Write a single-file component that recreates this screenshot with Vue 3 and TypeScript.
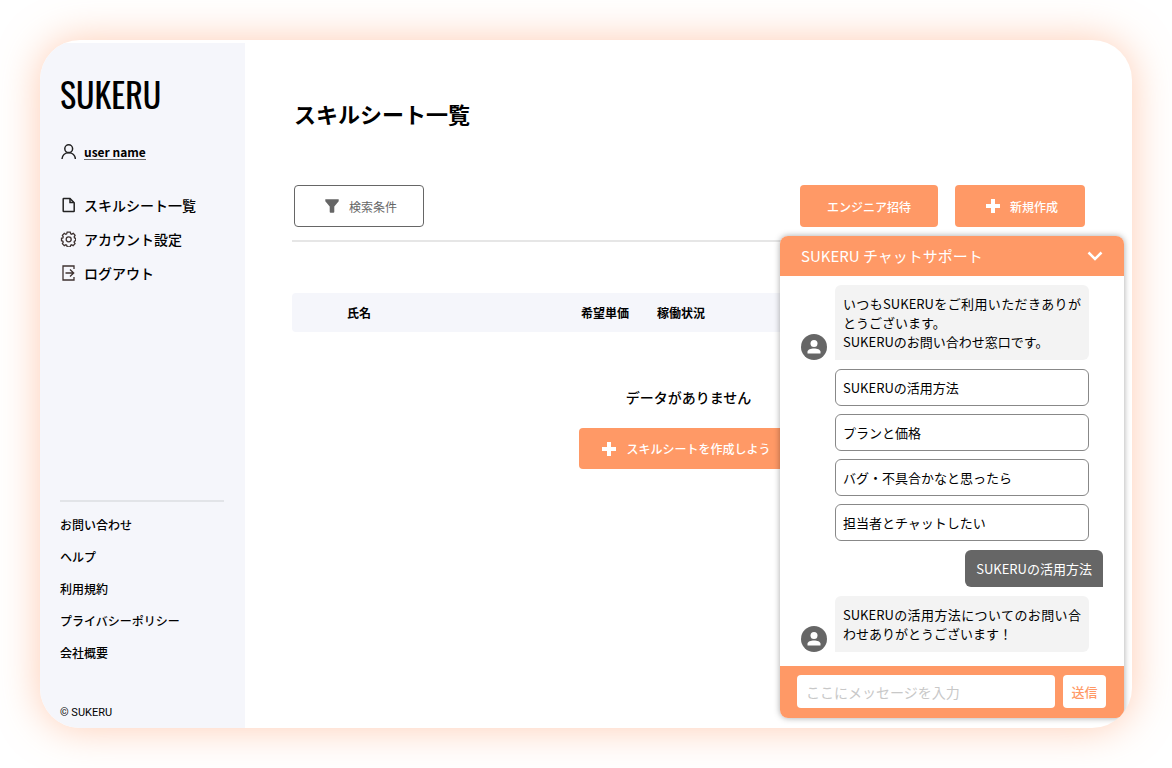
<script setup lang="ts">
import { ref } from 'vue'

type IconName = 'file' | 'gear' | 'logout'

const navItems: { label: string; icon: IconName }[] = [
  { label: 'スキルシート一覧', icon: 'file' },
  { label: 'アカウント設定', icon: 'gear' },
  { label: 'ログアウト', icon: 'logout' },
]

const footerLinks: string[] = ['お問い合わせ', 'ヘルプ', '利用規約', 'プライバシーポリシー', '会社概要']

const chatOptions: string[] = [
  'SUKERUの活用方法',
  'プランと価格',
  'バグ・不具合かなと思ったら',
  '担当者とチャットしたい',
]

const message = ref('')
</script>

<template>
  <div class="page">
    <div class="card">
      <aside class="sidebar">
        <div class="logo">SUKERU</div>

        <a href="#" class="user">
          <svg class="icon" viewBox="0 0 16 16" aria-hidden="true">
            <circle cx="8.700" cy="4.700" r="3.900" />
            <path d="M2 15c.2-3.700 2.900-6.300 6.700-6.300s6.500 2.600 6.700 6.300" />
          </svg>
          <span class="user-name">user name</span>
        </a>

        <nav class="nav">
          <a v-for="item in navItems" :key="item.label" href="#" class="nav-link">
            <svg v-if="item.icon === 'file'" class="icon" viewBox="0 0 16 16" aria-hidden="true">
              <path d="M3.700 1.500h6.300l4.200 4.200v8.300q0 .5-.5.5H3.700q-.5 0-.5-.5V2q0-.5.500-.5z" />
              <path d="M10 1.800v3.800h4" />
            </svg>
            <svg v-else-if="item.icon === 'gear'" class="icon warm" viewBox="0 0 16 16" aria-hidden="true">
              <path
                d="M7.200 1.100h3l.5 1.700 1 .4 1.600-.8 1.800 2-.9 1.500.3 1 1.200.4v2.400l-1.300.5-.3 1 .9 1.500-1.900 1.900-1.500-.8-.9.4-.5 1.700H7.200l-.5-1.700-.9-.4-1.500.8-1.900-1.900.8-1.500-.3-1-1.400-.5V7.300l1.400-.4.3-1-.8-1.500 1.900-2 1.500.8.900-.4z"
              />
              <circle cx="8.700" cy="8.300" r="2.500" />
            </svg>
            <svg v-else class="icon warm" viewBox="0 0 16 16" aria-hidden="true">
              <path d="M14 4V1H3v14h11v-3" />
              <path d="M5.500 8h8.200M10 4.500L13.700 8 10 11.500" />
            </svg>
            <span>{{ item.label }}</span>
          </a>
        </nav>

        <div class="side-footer">
          <a v-for="link in footerLinks" :key="link" href="#" class="side-link">{{ link }}</a>
        </div>
        <small class="copyright">© SUKERU</small>
      </aside>

      <main class="main">
        <h1 class="title">スキルシート一覧</h1>

        <div class="toolbar">
          <button type="button" class="btn btn-outline">
            <svg class="glyph" viewBox="0 0 14 14" aria-hidden="true">
              <path d="M.3.300h13.400v2L9.300 7.500v5.300q0 .9-.9.900H5.600q-.9 0-.9-.9V7.500L.3 2.300z" />
            </svg>
            検索条件
          </button>
          <div class="actions">
            <button type="button" class="btn btn-invite">エンジニア招待</button>
            <button type="button" class="btn btn-new">
              <svg class="glyph" viewBox="0 0 14 14" aria-hidden="true">
                <path d="M5 0h4v5h5v4H9v5H5V9H0V5h5z" />
              </svg>
              新規作成
            </button>
          </div>
        </div>

        <table class="table">
          <thead>
            <tr>
              <th scope="col" class="col-name">氏名</th>
              <th scope="col" class="col-price">希望単価</th>
              <th scope="col">稼働状況</th>
            </tr>
          </thead>
        </table>

        <section class="empty">
          <p class="empty-text">データがありません</p>
          <button type="button" class="btn btn-create">
            <svg class="glyph" viewBox="0 0 14 14" aria-hidden="true">
              <path d="M5 0h4v5h5v4H9v5H5V9H0V5h5z" />
            </svg>
            スキルシートを作成しよう
          </button>
        </section>
      </main>

      <section class="chat" aria-label="チャットサポート">
        <header class="chat-head">
          <h2 class="chat-title">SUKERU チャットサポート</h2>
          <button type="button" class="chat-toggle" aria-label="閉じる">
            <svg viewBox="0 0 16 10" aria-hidden="true">
              <path d="M1.500 1.500L8 8l6.500-6.500" />
            </svg>
          </button>
        </header>

        <div class="chat-body">
          <div class="row">
            <svg class="avatar" viewBox="0 0 26 26" aria-hidden="true">
              <circle class="avatar-bg" cx="13" cy="13" r="13" />
              <circle cx="13" cy="9.500" r="3.500" />
              <path d="M6.500 19.500v-1.700c0-2.200 3.300-3.400 6.500-3.400s6.500 1.200 6.500 3.400v1.700z" />
            </svg>
            <p class="bubble">いつもSUKERUをご利用いただきありがとうございます。<br />SUKERUのお問い合わせ窓口です。</p>
          </div>

          <div class="options">
            <button v-for="option in chatOptions" :key="option" type="button" class="option">{{ option }}</button>
          </div>

          <p class="reply">SUKERUの活用方法</p>

          <div class="row">
            <svg class="avatar" viewBox="0 0 26 26" aria-hidden="true">
              <circle class="avatar-bg" cx="13" cy="13" r="13" />
              <circle cx="13" cy="9.500" r="3.500" />
              <path d="M6.500 19.500v-1.700c0-2.200 3.300-3.400 6.500-3.400s6.500 1.200 6.500 3.400v1.700z" />
            </svg>
            <p class="bubble">SUKERUの活用方法についてのお問い合わせありがとうございます！</p>
          </div>
        </div>

        <form class="chat-form" @submit.prevent="message = ''">
          <input
            v-model="message"
            type="text"
            class="chat-input"
            aria-label="メッセージ"
            placeholder="ここにメッセージを入力"
          />
          <button type="submit" class="chat-send">送信</button>
        </form>
      </section>
    </div>
  </div>
</template>

<style>
body {
  margin: 0;
  background: #fff;
}
</style>

<style scoped>
.page,
.page * {
  box-sizing: border-box;
}

.page {
  display: flex;
  min-height: 100vh;
  padding: 40px;
  font-family: 'Noto Sans CJK JP', 'Noto Sans', sans-serif;
  color: #000;
}

.page button,
.page input {
  font-family: inherit;
}

.page button {
  cursor: pointer;
}

.card {
  position: relative;
  display: flex;
  flex: 1;
  overflow: hidden;
  background: #fff;
  border-radius: 40px;
  box-shadow: 0 0 40px rgba(255, 153, 102, 0.5);
}

.sidebar {
  display: flex;
  flex-direction: column;
  width: 205px;
  margin-top: 3px;
  padding: 27px 21px 7px 20px;
  background: #f5f6fb;
}

.logo {
  font-family: Oswald, 'Roboto Condensed', 'Liberation Sans Narrow', 'Liberation Sans', sans-serif;
  font-size: 34px;
  line-height: 48px;
}

.user {
  display: flex;
  align-items: center;
  gap: 8px;
  height: 20px;
  margin-top: 24px;
  color: #000;
  text-decoration: none;
}

.user-name {
  font-size: 12px;
  font-weight: 700;
  line-height: 14px;
  border-bottom: 1px solid #666;
}

.icon {
  flex: none;
  width: 16px;
  height: 16px;
  fill: none;
  stroke: #222;
  stroke-width: 1.5;
}

.warm {
  stroke: #3e3230;
  stroke-width: 1.3;
}

.nav {
  display: flex;
  flex-direction: column;
  gap: 14px;
  margin-top: 33px;
}

.nav-link {
  display: flex;
  align-items: center;
  gap: 8px;
  font-size: 14px;
  font-weight: 500;
  line-height: 20px;
  color: #000;
  text-decoration: none;
  white-space: nowrap;
}

.side-footer {
  display: flex;
  flex-direction: column;
  gap: 12px;
  margin-top: auto;
  padding-top: 13px;
  border-top: 2px solid #e2e4e8;
}

.side-link {
  font-size: 12px;
  font-weight: 500;
  line-height: 20px;
  color: #000;
  text-decoration: none;
}

.copyright {
  margin-top: 42px;
  font-family: Roboto, sans-serif;
  font-size: 11px;
  line-height: 16px;
}

.main {
  flex: 1;
  min-width: 0;
  padding: 56px 47px 40px;
}

.title {
  margin: 0;
  padding-left: 2px;
  font-size: 22px;
  font-weight: 700;
  line-height: 34px;
}

.toolbar {
  display: flex;
  justify-content: space-between;
  margin-top: 55px;
  padding: 0 0 13px 2px;
  border-bottom: 2px solid #e6e6e6;
}

.actions {
  display: flex;
  gap: 17px;
}

.btn {
  display: flex;
  align-items: center;
  justify-content: center;
  gap: 10px;
  height: 42px;
  padding: 0;
  font-size: 12px;
  font-weight: 500;
  color: #fff;
  background: #ff9966;
  border: 0;
  border-radius: 4px;
}

.btn-outline {
  width: 130px;
  padding-left: 4px;
  font-weight: 400;
  color: #666;
  background: #fff;
  border: 1px solid #666;
}

.btn-invite {
  width: 138px;
}

.btn-new {
  width: 130px;
  padding-left: 4px;
}

.btn-create {
  width: 219px;
  height: 41px;
  padding-right: 4px;
}

.glyph {
  flex: none;
  width: 14px;
  height: 14px;
  fill: currentColor;
}

.table {
  width: 100%;
  margin-top: 51px;
  border-collapse: separate;
  border-spacing: 0;
  table-layout: fixed;
  background: #f5f6fb;
  border-radius: 4px;
}

.table th {
  height: 39px;
  padding: 0;
  font-size: 12px;
  font-weight: 700;
  text-align: left;
}

.table .col-name {
  width: 289px;
  padding-left: 55px;
}

.table .col-price {
  width: 76px;
}

.empty {
  display: flex;
  flex-direction: column;
  align-items: center;
  gap: 21px;
  margin-top: 55px;
}

.empty-text {
  margin: 0;
  font-size: 14px;
  font-weight: 500;
  line-height: 20px;
}

.chat {
  position: absolute;
  right: 8px;
  bottom: 10px;
  width: 344px;
  overflow: hidden;
  background: #fff;
  border-radius: 8px;
  box-shadow: 0 0 6px rgba(0, 0, 0, 0.35);
}

.chat-head {
  display: flex;
  align-items: center;
  justify-content: space-between;
  height: 40px;
  padding: 0 21px;
  color: #fff;
  background: #ff9966;
}

.chat-title {
  margin: 0;
  font-size: 15px;
  font-weight: 400;
  line-height: 22px;
}

.chat-toggle {
  display: flex;
  padding: 0;
  background: none;
  border: 0;
}

.chat-toggle svg {
  width: 16px;
  height: 10px;
  fill: none;
  stroke: #fff;
  stroke-width: 2.5;
}

.chat-body {
  display: flex;
  flex-direction: column;
  gap: 9px;
  padding: 9px 21px 14px;
  font-size: 13px;
  line-height: 19px;
}

.row {
  display: flex;
  align-items: flex-end;
  gap: 8px;
  margin-right: 14px;
}

.avatar {
  flex: none;
  width: 26px;
  height: 26px;
  fill: #fff;
}

.avatar-bg {
  fill: #666;
}

.bubble {
  flex: 1;
  margin: 0;
  padding: 9px 8px;
  text-align: justify;
  background: #f3f3f3;
  border-radius: 6px 6px 6px 0;
}

.options {
  display: flex;
  flex-direction: column;
  gap: 8px;
  margin: 0 14px 0 34px;
}

.option {
  height: 37px;
  padding: 0 7px;
  font-size: 13px;
  color: #000;
  text-align: left;
  background: #fff;
  border: 1px solid #888;
  border-radius: 6px;
}

.reply {
  align-self: flex-end;
  margin: 0;
  padding: 9px 11px;
  color: #fff;
  background: #666;
  border-radius: 6px 6px 0 6px;
}

.chat-form {
  display: flex;
  gap: 8px;
  padding: 9px 18px 10px 17px;
  background: #ff9966;
}

.chat-input {
  flex: 1;
  min-width: 0;
  height: 33px;
  padding: 0 9px;
  font-size: 14px;
  background: #fff;
  border: 0;
  border-radius: 4px;
}

.chat-input::placeholder {
  color: #c8c8c8;
}

.chat-send {
  width: 43px;
  height: 33px;
  padding: 0;
  font-size: 13px;
  font-weight: 500;
  color: #ff9966;
  background: #fff;
  border: 0;
  border-radius: 4px;
}
</style>
